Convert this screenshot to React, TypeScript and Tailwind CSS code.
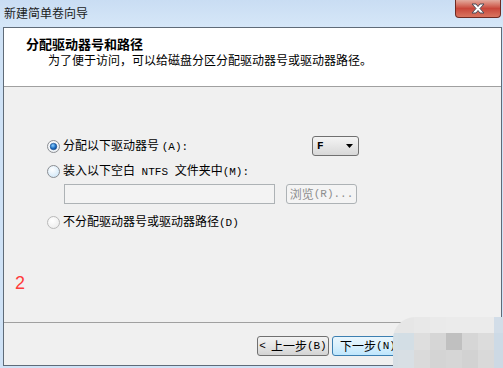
import React from 'react';

const cjk = "font-['Noto_Sans_CJK_SC','Noto_Sans',sans-serif]";
const mono = "font-['Liberation_Mono','Noto_Sans_CJK_SC',monospace]";

const Radio: React.FC<{ state: 'on' | 'off' | 'disabled' }> = ({ state }) => {
  const ring = state === 'disabled' ? '#b8b8b8' : '#8a8d91';
  const inner = state === 'on' ? '#e9eef3' : state === 'off' ? '#cfe6f7' : '#ececec';
  return (
    <svg width="13" height="13" viewBox="0 0 13 13" className="shrink-0">
      <defs>
        <radialGradient id={`rg-${state}`} cx="0.4" cy="0.35" r="0.7">
          <stop offset="0" stopColor="#ffffff" />
          <stop offset="1" stopColor={inner} />
        </radialGradient>
        <radialGradient id="dot" cx="0.4" cy="0.35" r="0.7">
          <stop offset="0" stopColor="#8fd0ff" />
          <stop offset="0.6" stopColor="#1d6fc4" />
          <stop offset="1" stopColor="#0c3f86" />
        </radialGradient>
      </defs>
      <circle cx="6.5" cy="6.5" r="6" fill={`url(#rg-${state})`} stroke={ring} strokeWidth="1" />
      {state === 'on' && <circle cx="6.5" cy="6.5" r="3.3" fill="url(#dot)" stroke="#1b4f8f" strokeWidth="0.6" />}
    </svg>
  );
};

const BlurCell: React.FC<{ c: string }> = ({ c }) => <div className={c} />;

export default function App() {
  return (
    <div className={`relative w-[503px] h-[368px] overflow-hidden bg-[#cfe2f6] ${cjk}`}>
      {/* title bar */}
      <div className="h-[27px] flex items-start bg-gradient-to-b from-[#c9ddf3] to-[#d6e7f8]">
        <div className="pl-[4px] pt-[5px] text-[12px] leading-[16px] text-[#1b1b1b]">新建简单卷向导</div>
        <div className="ml-auto mr-[2px] w-[46px] h-[18px] rounded-b-[4px] border border-t-0 border-[#6e2a22] bg-gradient-to-b from-[#e2aa9e] via-[#c8463a] to-[#d9745f] flex items-center justify-center">
          <svg width="16" height="11" viewBox="0 0 16 11">
            <path d="M2 1 H6 L8 3.5 L10 1 H14 L10 5.5 L14 10 H10 L8 7.5 L6 10 H2 L6 5.5 Z" fill="#ffffff" stroke="#4b4b57" strokeWidth="1" strokeLinejoin="round" />
          </svg>
        </div>
      </div>

      {/* dialog body */}
      <div className="ml-[3px] w-[499px] h-[339px] border border-[#5f6b78] bg-[#f0f0f0] flex flex-col">
        <div className="h-[59px] bg-white border-b border-[#a0a0a0] pt-[8px]">
          <div className="pl-[22px] text-[13px] leading-[16px] font-bold text-black">分配驱动器号和路径</div>
          <div className="pl-[44px] text-[12px] leading-[16px] text-black">为了便于访问，可以给磁盘分区分配驱动器号或驱动器路径。</div>
        </div>

        <div className="h-[235px] flex flex-col text-[12px] text-black">
          <div className="mt-[49px] h-[20px] flex items-center pl-[43px]">
            <div className="w-[265px] flex items-center gap-[3px]">
              <Radio state="on" />
              <span className="leading-[14px]">分配以下驱动器号 <span className={`${mono} text-[11px]`}>(A):</span></span>
            </div>
            <div className="w-[47px] h-[20px] rounded-[3px] border border-[#707070] bg-gradient-to-b from-[#f4f4f4] to-[#d8d8d8] flex items-center pl-[4px] pr-[5px]">
              <span className={`${mono} text-[11px] font-bold`}>F</span>
              <svg className="ml-auto" width="7" height="4" viewBox="0 0 7 4"><path d="M0 0 H7 L3.5 4 Z" fill="#000" /></svg>
            </div>
          </div>

          <div className="mt-[8px] h-[14px] flex items-center pl-[43px] gap-[3px]">
            <Radio state="off" />
            <span className="leading-[14px]">装入以下空白<span className={`${mono} text-[11px]`}> NTFS </span>文件夹中<span className={`${mono} text-[11px]`}>(M):</span></span>
          </div>

          <div className="mt-[6px] h-[20px] flex items-center pl-[60px] gap-[11px]">
            <div className="w-[211px] h-[20px] border border-[#adb2b5] bg-[#f3f3f3]" />
            <div className="w-[71px] h-[20px] rounded-[3px] border border-[#adb2b5] bg-[#f4f4f4] flex items-center justify-center text-[#8d8d8d] leading-[14px]">
              浏览<span className={`${mono} text-[11px]`}>(R)...</span>
            </div>
          </div>

          <div className="mt-[11px] h-[14px] flex items-center pl-[43px] gap-[3px]">
            <Radio state="disabled" />
            <span className="leading-[14px]">不分配驱动器号或驱动器路径<span className={`${mono} text-[11px]`}>(D)</span></span>
          </div>

          <div className={`mt-[44px] pl-[11px] text-[18px] leading-[20px] text-[#ff3b3b] font-['Liberation_Sans',sans-serif]`}>2</div>
        </div>

        <div className="h-[43px] border-t border-[#a0a0a0] pt-[13px] pl-[253px] flex gap-[3px] text-[12px]">
          <div className="w-[72px] h-[20px] rounded-[3px] border border-[#707070] bg-gradient-to-b from-[#f3f3f3] via-[#e6e6e6] to-[#d3d3d3] flex items-center justify-center leading-[14px]">
            <span className={`${mono} text-[11px] mr-[5px]`}>&lt;</span>上一步<span className={`${mono} text-[11px]`}>(B)</span>
          </div>
          <div className="w-[72px] h-[20px] rounded-[3px] border border-[#3c7fb1] bg-gradient-to-b from-[#eaf6fd] via-[#d9f0fc] to-[#bee6fd] flex items-center justify-center leading-[14px]">
            下一步<span className={`${mono} text-[11px]`}>(N)</span>
          </div>
        </div>
      </div>

      {/* blurred patch over the lower right corner */}
      <div className="absolute left-[393px] top-[317px] w-[110px] h-[51px] rounded-tl-[22px] overflow-hidden grid grid-cols-[5px_16px_16px_16px_16px_16px_16px_9px] grid-rows-[16px_17px_18px]">
        <BlurCell c="bg-[#e6e6e6]" />
        <BlurCell c="bg-[#e6e6e6]" />
        <BlurCell c="bg-[#e8e8e8]" />
        <BlurCell c="bg-[#eaeaea]" />
        <BlurCell c="bg-[#ebebeb]" />
        <BlurCell c="bg-[#ebebeb]" />
        <BlurCell c="bg-[#ebebeb]" />
        <BlurCell c="bg-[#d2dde8]" />
        <BlurCell c="bg-[#d4dfe6]" />
        <BlurCell c="bg-[#d3dee5]" />
        <BlurCell c="bg-[#dedede]" />
        <BlurCell c="bg-[#d6d6d6]" />
        <BlurCell c="bg-[#c0c0c0]" />
        <BlurCell c="bg-[#d6d6d6]" />
        <BlurCell c="bg-[#dcdcdc]" />
        <BlurCell c="bg-[#cddae6]" />
        <BlurCell c="bg-[#d6dee4]" />
        <BlurCell c="bg-[#d8dfe4]" />
        <BlurCell c="bg-[#dadada]" />
        <BlurCell c="bg-[#d4d4d4]" />
        <BlurCell c="bg-[#d6d6d6]" />
        <BlurCell c="bg-[#d2d2d2]" />
        <BlurCell c="bg-[#d9d9d9]" />
        <BlurCell c="bg-[#cdd9e4]" />
      </div>
    </div>
  );
}
